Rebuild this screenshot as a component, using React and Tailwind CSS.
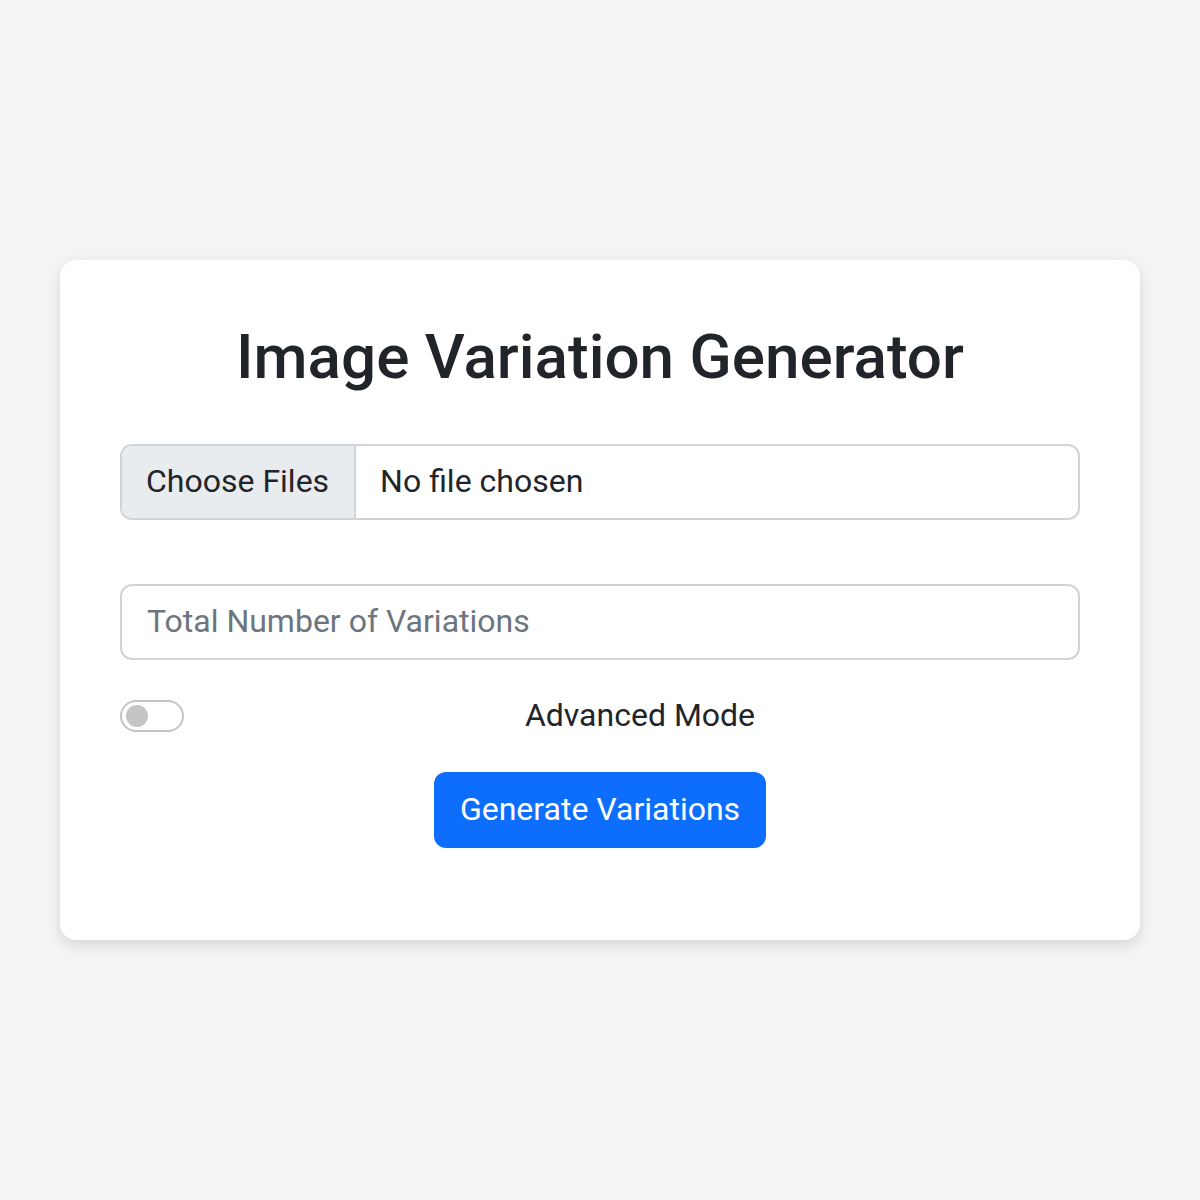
export default function App() {
  return (
    <div
      className="min-h-screen flex items-center justify-center bg-[#f4f4f4] px-[60px]"
      style={{ fontFamily: "Roboto, 'Liberation Sans', sans-serif" }}
    >
      <div className="w-full h-[680px] bg-white rounded-[16px] shadow-[0_5px_14px_rgba(0,0,0,0.12)] px-[60px] pt-[58px]">
        <h1 className="text-center text-[62px] leading-[77px] font-medium text-[#212529] mb-[49px]">
          Image Variation Generator
        </h1>

        <div className="flex h-[76px] border-2 border-[#d0d4d8] rounded-[12px] overflow-hidden text-[32px] text-[#212529]">
          <div className="flex items-center pb-[2px] pl-[24px] pr-[25px] bg-[#e9ecef] border-r-2 border-[#d0d4d8]">
            Choose Files
          </div>
          <div className="flex items-center pb-[2px] px-[24px]">No file chosen</div>
        </div>

        <input
          className="mt-[64px] w-full h-[76px] border-2 border-[#d0d4d8] rounded-[12px] px-[25px] pb-[2px] text-[32px] text-[#212529] placeholder:text-[#6c757d] outline-none"
          placeholder="Total Number of Variations"
        />

        <div className="mt-[32px] h-[48px] flex items-center">
          <div className="w-[64px] h-[32px] rounded-full border-2 border-[#c4c4c4] flex items-center pl-[4px]">
            <div className="w-[22px] h-[22px] rounded-full bg-[#c4c4c4]" />
          </div>
          <div className="flex-1 ml-[16px] pb-[2px] text-center text-[32px] text-[#212529]">
            Advanced Mode
          </div>
        </div>

        <div className="mt-[32px] flex justify-center">
          <button className="h-[76px] px-[26px] pb-[2px] rounded-[12px] bg-[#0d6efd] text-white text-[32px]">
            Generate Variations
          </button>
        </div>
      </div>
    </div>
  );
}
